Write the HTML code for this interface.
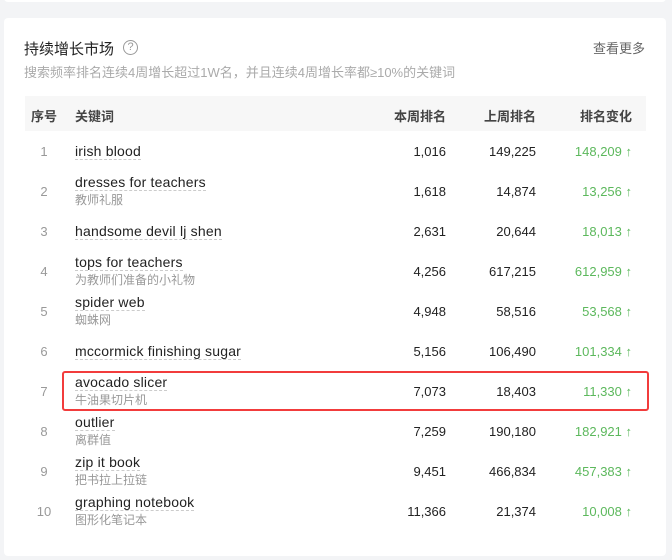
<!DOCTYPE html>
<html><head><meta charset="utf-8"><style>
*{margin:0;padding:0;box-sizing:border-box}
body{width:672px;height:560px;background:#f3f4f6;font-family:"Liberation Sans","Noto Sans CJK SC",sans-serif;position:relative;overflow:hidden}
.top{position:absolute;left:4px;top:-10px;width:662px;height:12px;background:#fff;border-radius:4px}
.card{position:absolute;left:4px;top:18px;width:662px;height:538px;background:#fff;border-radius:4px}
.t{position:absolute;left:24px;top:38px;font-size:15px;color:#222}
.q{position:absolute;left:123px;top:40px;width:15px;height:15px;border:1px solid #999;border-radius:50%;font-size:11px;color:#999;text-align:center;line-height:13px}
.more{position:absolute;left:593px;top:38px;font-size:13px;color:#666}
.sub{position:absolute;left:24px;top:62px;font-size:13px;color:#aaa}
.hd{position:absolute;left:25px;top:96px;width:621px;height:35px;background:#f7f7f7;font-size:13px;color:#444;font-weight:bold}
.hd span,.r span{position:absolute}
.r{position:absolute;left:0;width:672px;height:40px;font-size:13px;color:#222}
.n{left:25px;width:38px;text-align:center;color:#999;top:13px}
.k{left:75px;font-size:14px;letter-spacing:0.2px}
.k1{top:12px}
.k2{top:3px}
.k u{text-decoration:none;border-bottom:1px dashed #ccc;padding-bottom:0}
.cn{left:75px;top:20px;font-size:12px;color:#999}
.a{right:226px;top:13px}.b{right:136px;top:13px}.c{right:40px;top:13px;color:#5cb85c}
.box{position:absolute;left:62px;top:371px;width:587px;height:40px;border:2px solid #f23c3c;border-radius:3px}
</style></head><body>
<div class="top"></div>
<div class="card"></div>
<div class="t">持续增长市场</div><div class="q">?</div>
<div class="more">查看更多</div>
<div class="sub">搜索频率排名连续4周增长超过1W名，并且连续4周增长率都≥10%的关键词</div>
<div class="hd"><span style="left:6px;top:10px">序号</span><span style="left:50px;top:10px">关键词</span><span style="right:200px;top:10px">本周排名</span><span style="right:110px;top:10px">上周排名</span><span style="right:14px;top:10px">排名变化</span></div>

<div class="r" style="top:131px"><span class="n">1</span><span class="k k1"><u>irish blood</u></span><span class="a">1,016</span><span class="b">149,225</span><span class="c">148,209 ↑</span></div>
<div class="r" style="top:171px"><span class="n">2</span><span class="k k2"><u>dresses for teachers</u></span><span class="cn">教师礼服</span><span class="a">1,618</span><span class="b">14,874</span><span class="c">13,256 ↑</span></div>
<div class="r" style="top:211px"><span class="n">3</span><span class="k k1"><u>handsome devil lj shen</u></span><span class="a">2,631</span><span class="b">20,644</span><span class="c">18,013 ↑</span></div>
<div class="r" style="top:251px"><span class="n">4</span><span class="k k2"><u>tops for teachers</u></span><span class="cn">为教师们准备的小礼物</span><span class="a">4,256</span><span class="b">617,215</span><span class="c">612,959 ↑</span></div>
<div class="r" style="top:291px"><span class="n">5</span><span class="k k2"><u>spider web</u></span><span class="cn">蜘蛛网</span><span class="a">4,948</span><span class="b">58,516</span><span class="c">53,568 ↑</span></div>
<div class="r" style="top:331px"><span class="n">6</span><span class="k k1"><u>mccormick finishing sugar</u></span><span class="a">5,156</span><span class="b">106,490</span><span class="c">101,334 ↑</span></div>
<div class="r" style="top:371px"><span class="n">7</span><span class="k k2"><u>avocado slicer</u></span><span class="cn">牛油果切片机</span><span class="a">7,073</span><span class="b">18,403</span><span class="c">11,330 ↑</span></div>
<div class="r" style="top:411px"><span class="n">8</span><span class="k k2"><u>outlier</u></span><span class="cn">离群值</span><span class="a">7,259</span><span class="b">190,180</span><span class="c">182,921 ↑</span></div>
<div class="r" style="top:451px"><span class="n">9</span><span class="k k2"><u>zip it book</u></span><span class="cn">把书拉上拉链</span><span class="a">9,451</span><span class="b">466,834</span><span class="c">457,383 ↑</span></div>
<div class="r" style="top:491px"><span class="n">10</span><span class="k k2"><u>graphing notebook</u></span><span class="cn">图形化笔记本</span><span class="a">11,366</span><span class="b">21,374</span><span class="c">10,008 ↑</span></div>
<div class="box"></div>
</body></html>
